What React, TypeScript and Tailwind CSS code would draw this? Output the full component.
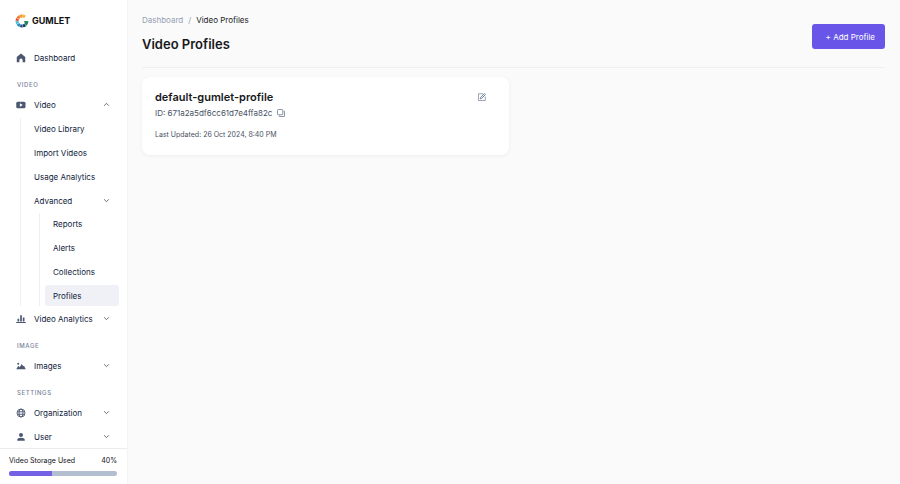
import type { ReactNode } from "react";
import clsx from "clsx";

interface NavRowProps {
  label: string;
  icon?: ReactNode;
  active?: boolean;
}

interface NavGroupProps extends NavRowProps {
  open?: boolean;
}

const HomeIcon = () => (
  <svg viewBox="0 0 20 20" className="size-[10px] shrink-0" fill="currentColor" aria-hidden="true">
    <path d="M10 1 18.500 8.200V18.500h-5.300v-4.500a3.200 3.200 0 0 0-6.400 0v4.500H1.500V8.200z" />
  </svg>
);

const VideoIcon = () => (
  <svg viewBox="0 0 20 20" className="size-[10px] shrink-0" aria-hidden="true">
    <rect x="0.500" y="3.500" width="18.500" height="13" rx="3" fill="currentColor" />
    <path d="M7.800 6.500v7l5.700-3.500z" fill="white" />
  </svg>
);

const ChartIcon = () => (
  <svg viewBox="0 0 20 20" className="size-[10px] shrink-0" fill="currentColor" aria-hidden="true">
    <path d="M3 9.500h3.400V15H3zM8.300 2.500h3.400V15H8.300zM13.600 7H17v8h-3.400zM0.500 16h19v2.200h-19z" />
  </svg>
);

const ImagesIcon = () => (
  <svg viewBox="0 0 20 20" className="size-[10px] shrink-0" fill="currentColor" aria-hidden="true">
    <circle cx="4.500" cy="5.500" r="2" />
    <path d="M0.500 16.500 4.500 9.500l2.800 2.800L11.500 6l3 4.500 1.500-1 3.500 7z" />
  </svg>
);

const GlobeIcon = () => (
  <svg
    viewBox="0 0 20 20"
    className="size-[10px] shrink-0"
    fill="none"
    stroke="currentColor"
    strokeWidth="1.800"
    aria-hidden="true"
  >
    <circle cx="10" cy="10" r="8" />
    <ellipse cx="10" cy="10" rx="4" ry="8" />
    <path d="M2.500 7.500h15M2.500 12.500h15" />
  </svg>
);

const UserIcon = () => (
  <svg viewBox="0 0 20 20" className="size-[10px] shrink-0" fill="currentColor" aria-hidden="true">
    <circle cx="10" cy="6" r="4" />
    <path d="M2.500 17.500v-2c0-2.500 3-4 7.500-4s7.500 1.500 7.500 4v2z" />
  </svg>
);

const Chevron = ({ open }: { open?: boolean }) => (
  <svg
    viewBox="0 0 12 12"
    className={clsx("size-[7px] shrink-0 text-[#596375]", open && "rotate-180")}
    fill="none"
    stroke="currentColor"
    strokeWidth="1.600"
    aria-hidden="true"
  >
    <path d="m2 4 4 4 4-4" />
  </svg>
);

const CopyIcon = () => (
  <svg viewBox="0 0 16 16" className="size-2" fill="none" stroke="currentColor" strokeWidth="1.800" aria-hidden="true">
    <rect x="1" y="1" width="10.500" height="10.500" rx="1.500" />
    <path d="M13 4.500h2V14a1 1 0 0 1-1 1H4.500v-2" />
  </svg>
);

const EditIcon = () => (
  <svg viewBox="0 0 16 16" className="size-2" fill="none" stroke="currentColor" aria-hidden="true">
    <path d="M10 1.500H1v13.500h13.500V7" strokeWidth="1.300" />
    <path d="m4.500 11.500.6-2.700L12.800 1.200l2 2-7.600 7.600z" strokeWidth="1.800" />
  </svg>
);

// Ring opening to the right, one arc per brand colour
const logoArcs = [
  { color: "#f9b233", d: "M18.500 5.500A9.300 9.300 0 0 0 14.500 3.800" },
  { color: "#f39325", d: "M14 3.700A9.300 9.300 0 0 0 9.200 4.500" },
  { color: "#ee7a22", d: "M8.700 4.800A9.300 9.300 0 0 0 5.200 8" },
  { color: "#e2502c", d: "M4.900 8.600A9.300 9.300 0 0 0 3.700 12.600" },
  { color: "#45bfd3", d: "M3.700 13.200A9.300 9.300 0 0 0 5.100 17.800" },
  { color: "#1b91c4", d: "M5.400 18.300A9.300 9.300 0 0 0 9.100 21.500" },
  { color: "#23508e", d: "M9.700 21.700A9.300 9.300 0 0 0 14.200 22.200" },
  { color: "#173d5c", d: "M14.800 22.100A9.300 9.300 0 0 0 18.900 20.100" },
  { color: "#237a5b", d: "M19.400 19.700A9.300 9.300 0 0 0 22 14" },
];

const Logo = () => (
  <a href="#" className="flex items-center gap-[3px] text-[9px] leading-[14px] font-bold text-[#111]">
    <svg viewBox="0 0 26 26" className="size-[14px]" fill="none" strokeWidth="5.500" aria-hidden="true">
      {logoArcs.map(arc => (
        <path key={arc.color} d={arc.d} stroke={arc.color} />
      ))}
      <path d="M17 14.500h7.500" stroke="#2b8c61" strokeWidth="3" />
    </svg>
    GUMLET
  </a>
);

const NavLink = ({ label, icon, active }: NavRowProps) => (
  <a
    href="#"
    aria-current={active ? "page" : undefined}
    className={clsx("flex h-[21px] items-center gap-2 rounded-[3px] px-2", active && "bg-[#f0f1f6]")}
  >
    {icon && <span className="text-[#4c5872]">{icon}</span>}
    {label}
  </a>
);

const NavGroup = ({ label, icon, open }: NavGroupProps) => (
  <button type="button" aria-expanded={!!open} className="flex h-[21px] w-full items-center justify-between pr-[9px] pl-2">
    <span className="flex items-center gap-2">
      {icon && <span className="text-[#4c5872]">{icon}</span>}
      {label}
    </span>
    <Chevron open={open} />
  </button>
);

const SectionLabel = ({ children }: { children: ReactNode }) => (
  <h2 className="mt-[10px] mb-[3px] pl-[9px] text-[6px] leading-[13px] font-medium tracking-widest text-[#77849b]">
    {children}
  </h2>
);

function Sidebar() {
  return (
    <aside className="flex h-screen w-32 shrink-0 flex-col border-r border-[#f4f4f5] bg-white text-[#101c3a]">
      <div className="px-[15px] pt-[14px] pb-[19px]">
        <Logo />
      </div>
      <nav className="min-h-0 flex-1 overflow-hidden px-2 text-[8px] leading-3">
        <NavLink label="Dashboard" icon={<HomeIcon />} />

        <SectionLabel>VIDEO</SectionLabel>
        <NavGroup label="Video" icon={<VideoIcon />} open />
        <ul className="mt-[3px] ml-3 flex flex-col gap-[3px] border-l border-[#eceef2] pl-[5px]">
          {["Video Library", "Import Videos", "Usage Analytics"].map(label => (
            <li key={label}>
              <NavLink label={label} />
            </li>
          ))}
          <li>
            <NavGroup label="Advanced" open={false} />
            <ul className="mt-[2px] ml-[13px] flex flex-col gap-[3px] border-l border-[#eceef2] pl-[5px]">
              {["Reports", "Alerts", "Collections", "Profiles"].map(label => (
                <li key={label}>
                  <NavLink label={label} active={label === "Profiles"} />
                </li>
              ))}
            </ul>
          </li>
        </ul>
        <div className="mt-[2px]">
          <NavGroup label="Video Analytics" icon={<ChartIcon />} />
        </div>

        <SectionLabel>IMAGE</SectionLabel>
        <NavGroup label="Images" icon={<ImagesIcon />} />

        <SectionLabel>SETTINGS</SectionLabel>
        <div className="flex flex-col gap-[3px]">
          <NavGroup label="Organization" icon={<GlobeIcon />} />
          <NavGroup label="User" icon={<UserIcon />} />
        </div>
      </nav>

      {/* Storage */}
      <div className="border-t border-[#ececf0] pt-[6px] pr-[10px] pb-2 pl-[9px]">
        <div className="flex justify-between text-[7px] leading-[11px] text-[#101114]">
          <span id="storage-label">Video Storage Used</span>
          <span>40%</span>
        </div>
        <div
          role="progressbar"
          aria-labelledby="storage-label"
          aria-valuenow={40}
          className="mt-[5px] h-[5px] overflow-hidden rounded-full bg-[#b3bfd0]"
        >
          <div className="h-full w-2/5 bg-[#7561e6]" />
        </div>
      </div>
    </aside>
  );
}

function ProfileCard() {
  return (
    <article className="rounded-lg bg-white px-[13px] pt-3 pb-[14px] shadow-[0_1px_4px_rgba(0,0,0,0.05)]">
      <div className="flex items-center justify-between pr-[10px]">
        <h2 className="text-[11px] leading-4 font-semibold text-[#17181a]">default-gumlet-profile</h2>
        <button type="button" aria-label="Edit profile" className="text-[#64748b]">
          <EditIcon />
        </button>
      </div>
      <div className="flex items-center gap-[5px] text-[8px] leading-4 text-[#475163]">
        <span>ID: 671a2a5df6cc61d7e4ffa82c</span>
        <button type="button" aria-label="Copy ID" className="text-[#7c899d]">
          <CopyIcon />
        </button>
      </div>
      <p className="mt-2 text-[7px] leading-3 text-[#475163]">Last Updated: 26 Oct 2024, 8:40 PM</p>
    </article>
  );
}

export default function App() {
  return (
    <div className="flex min-h-screen bg-[#fafafa] font-['Inter',sans-serif]">
      <Sidebar />
      <main className="min-w-0 flex-1 px-[15px] pt-[14px] pl-[14px]">
        <header className="flex items-start justify-between border-b border-[#f0f0f2] pb-[13px]">
          <div>
            <nav aria-label="Breadcrumb" className="flex gap-[5px] text-[8px] leading-3 text-[#94a0b3]">
              <a href="#">Dashboard</a>
              <span>/</span>
              <span className="text-[#222326]">Video Profiles</span>
            </nav>
            <h1 className="mt-2 text-[13px] leading-5 font-semibold text-[#17181a]">Video Profiles</h1>
          </div>
          <button
            type="button"
            className="mt-[10px] h-[25px] rounded-[3px] bg-[#6956e8] pr-[10px] pl-[14px] text-[8px] leading-3 text-white"
          >
            + Add Profile
          </button>
        </header>
        <section className="mt-[9px] grid grid-cols-2 gap-[10px]">
          <ProfileCard />
        </section>
      </main>
    </div>
  );
}
